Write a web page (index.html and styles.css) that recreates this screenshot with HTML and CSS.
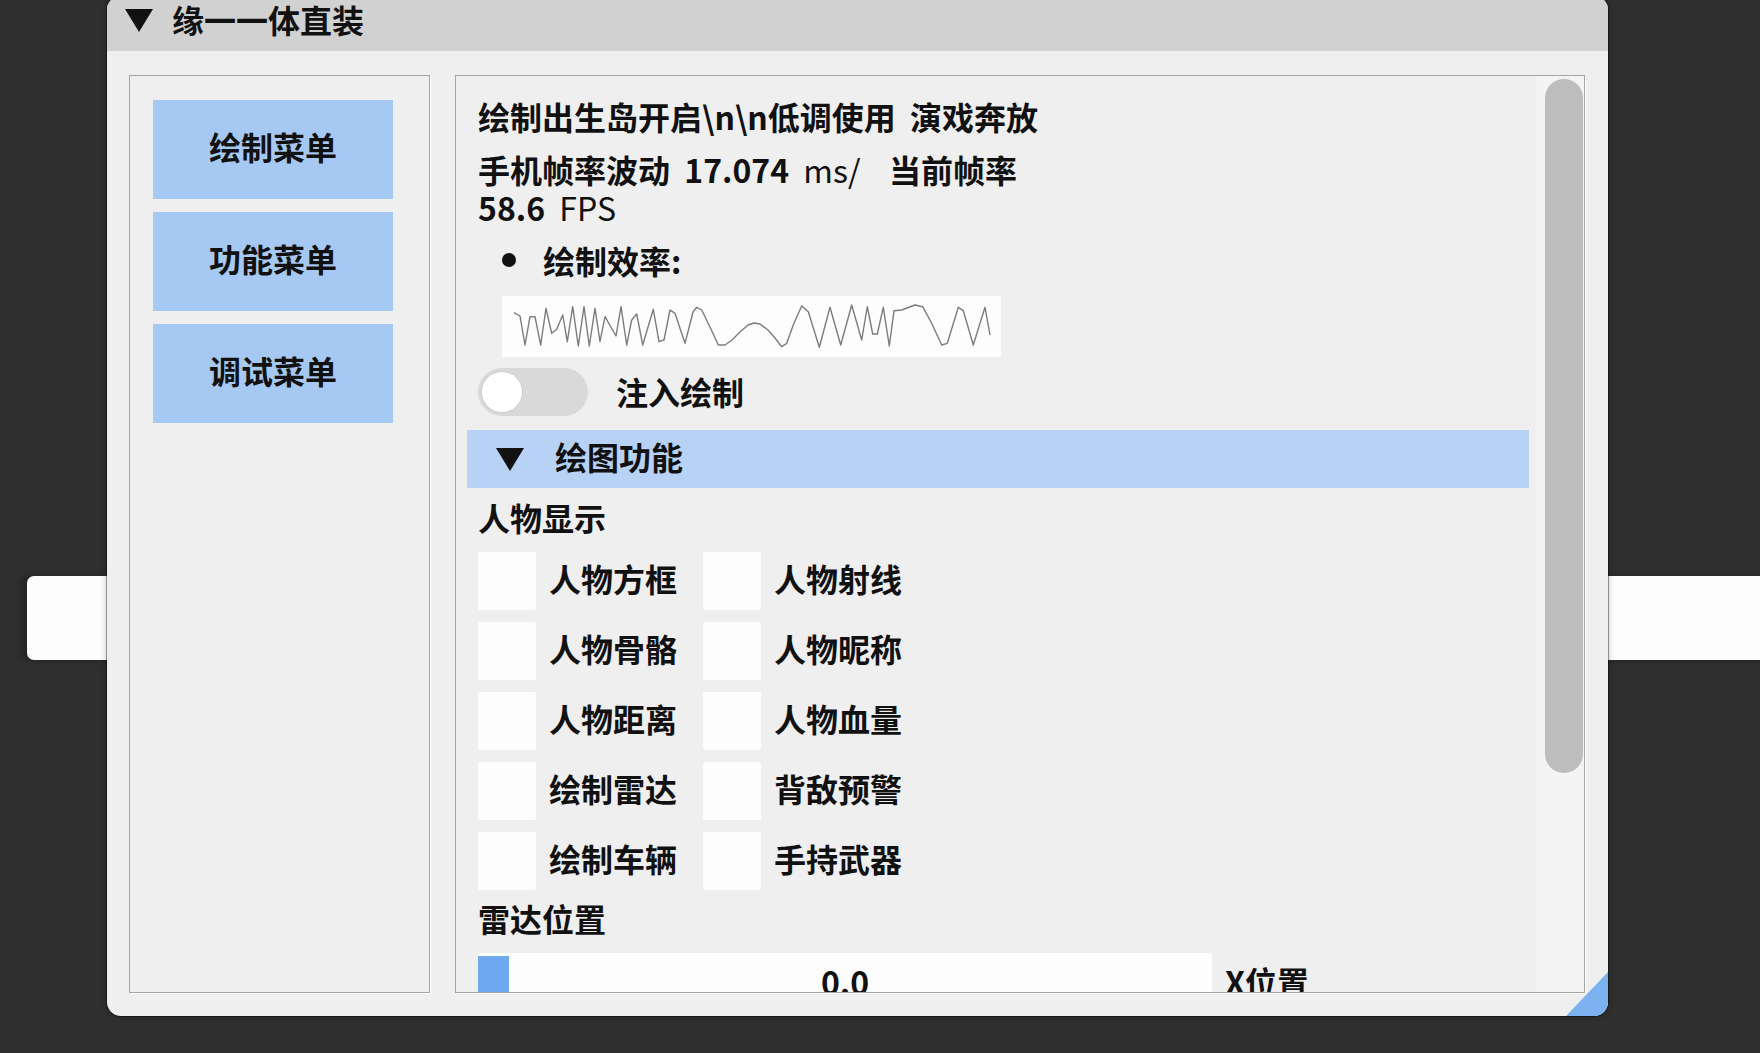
FILE: index.html
```html
<!DOCTYPE html>
<html lang="zh">
<head>
  <meta charset="UTF-8" />
  <title>缘一一体直装</title>
  <link rel="stylesheet" href="styles.css">
</head>
<body>
  <div class="backdrop-bar"></div>

  <div class="window">
    <div class="titlebar">
      <span class="arrow"></span>
      <span class="txt">缘一一体直装</span>
    </div>

    <div class="window-body">
      <div class="menu-panel">
        <button class="menu-btn">绘制菜单</button>
        <button class="menu-btn">功能菜单</button>
        <button class="menu-btn">调试菜单</button>
      </div>

      <div class="content-panel">
        <div class="content">
          <p class="line">绘制出生岛开启\n\n低调使用 演戏奔放</p>
          <p class="line stats">手机帧率波动 17.074 <span class="thin">ms/</span>&nbsp; 当前帧率</p>
          <p class="line">58.6 <span class="thin">FPS</span></p>

          <div class="bullet-row"><span class="dot"></span>绘制效率:</div>

          <svg class="plot" viewBox="0 0 499 61">
            <polyline fill="none" stroke="#7c7c7c" stroke-width="1.4" stroke-linejoin="round"
              points="12,16.7 18,20 23,49 28,20.7 33,20.7 38.7,49 44,12.3 49.7,37.3 54.7,33.3 60.7,19 65.3,45.7 70.7,10.7 76.3,50 82,10.7 87.3,50 93,12.3 98,45.7 103,20.7 114,40 119,10.7 124.7,49 129.7,24 134.7,18 140.7,49 151.3,13.3 157,45.7 162,44 168,14 173,17.3 183,47.3 191,16 194.7,11.3 199.7,14 208,31 216.3,49 223,49 230,44 238,36 246,29 252,27 258,28 266,34 273,42 279.7,50.7 284.7,47.3 292,27 299.7,10 306.3,15.7 317.3,51.3 328,11.3 338.7,49 349.7,9 359.7,44 365.3,10.7 370.7,38 375.3,38 381.3,11.3 387.3,50 392,14.7 399.7,14 413,9 420.7,10.7 430,28 439.7,49 445.3,47.3 456.3,11.3 461.3,14.7 471.3,49 483,11.3 488,39" />
          </svg>

          <div class="toggle-row">
            <span class="toggle"><span class="knob"></span></span>
            <span class="txt">注入绘制</span>
          </div>

          <div class="section-header"><span class="arrow"></span><span class="txt">绘图功能</span></div>

          <div class="label">人物显示</div>
          <div class="check-grid">
            <label class="check"><span class="box"></span><span class="txt">人物方框</span></label>
            <label class="check"><span class="box"></span><span class="txt">人物射线</span></label>
            <label class="check"><span class="box"></span><span class="txt">人物骨骼</span></label>
            <label class="check"><span class="box"></span><span class="txt">人物昵称</span></label>
            <label class="check"><span class="box"></span><span class="txt">人物距离</span></label>
            <label class="check"><span class="box"></span><span class="txt">人物血量</span></label>
            <label class="check"><span class="box"></span><span class="txt">绘制雷达</span></label>
            <label class="check"><span class="box"></span><span class="txt">背敌预警</span></label>
            <label class="check"><span class="box"></span><span class="txt">绘制车辆</span></label>
            <label class="check"><span class="box"></span><span class="txt">手持武器</span></label>
          </div>

          <div class="label radar">雷达位置</div>
          <div class="slider-row">
            <div class="slider">
              <span class="slider-grab"></span>
              <span class="txt">0.0</span>
            </div>
            <span class="txt">X位置</span>
          </div>
        </div>

        <div class="scrollbar"><div class="scroll-grab"></div></div>
      </div>
    </div>

    <div class="resize-grip"></div>
  </div>
</body>
</html>
```

FILE: styles.css
```css
body {
  margin: 0;
  height: 1053px;
  overflow: hidden;
  position: relative;
  background: #2f2f2f;
  color: #111;
  font-family: "Noto Sans CJK SC", sans-serif;
  font-size: 32px;
  font-weight: 700;
}

/* white strip of the app behind the window */
.backdrop-bar {
  position: absolute;
  left: 27px;
  right: -20px;
  top: 576px;
  height: 84px;
  background: #fdfdfd;
  border-radius: 7px;
  box-shadow: -5px 0 6px rgba(0, 0, 0, 0.25);
}

.window {
  position: relative;
  margin: -4px 0 0 107px;
  width: 1501px;
  height: 1020px;
  background: #efefef;
  border-radius: 14px;
  overflow: hidden;
  box-shadow: 0 0 0 1px rgba(0, 0, 0, 0.35), 0 0 6px rgba(0, 0, 0, 0.3);
  display: flex;
  flex-direction: column;
}

.txt {
  margin-bottom: 5px;
}

.titlebar {
  height: 55px;
  box-sizing: border-box;
  padding: 0 0 6px 18px;
  background: #d1d1d1;
  line-height: 38px;
  display: flex;
  align-items: center;
  gap: 19px;
}

.titlebar .txt {
  margin-bottom: 3px;
}

.arrow {
  width: 0;
  height: 0;
  border-left: 14px solid transparent;
  border-right: 14px solid transparent;
  border-top: 23px solid #111;
}

.window-body {
  flex: 1;
  display: flex;
  gap: 25px;
  padding: 24px 23px 23px 22px;
  min-height: 0;
}

.menu-panel,
.content-panel {
  border: 1px solid #a4a4a4;
  box-shadow: 1px 1px 0 #fff;
}

.menu-panel {
  width: 301px;
  box-sizing: border-box;
  padding: 24px 0 0 23px;
  display: flex;
  flex-direction: column;
  gap: 13px;
}

.menu-btn {
  width: 240px;
  height: 99px;
  padding: 0 0 7px;
  border: none;
  background: #a6c9f4;
  color: #111;
  font: inherit;
}

.content-panel {
  flex: 1;
  display: flex;
  overflow: hidden;
}

.content {
  flex: 1;
  min-width: 0;
  padding: 21px 7px 0 22px;
  line-height: 38px;
  overflow: hidden;
}

.line {
  margin: 0;
  word-spacing: 7px;
}

.stats {
  margin-top: 15px;
}

.thin {
  font-weight: 400;
}

.bullet-row {
  margin-top: 15px;
  display: flex;
  align-items: center;
}

.dot {
  width: 14px;
  height: 14px;
  margin: 0 27px 0 24px;
  border-radius: 50%;
  background: #111;
}

.plot {
  display: block;
  width: 499px;
  height: 61px;
  margin: 17px 0 0 24px;
  background: #fdfdfd;
}

.toggle-row {
  margin-top: 11px;
  display: flex;
  align-items: center;
  gap: 28px;
}

.toggle-row .txt {
  margin-bottom: 2px;
}

.toggle {
  width: 110px;
  height: 48px;
  box-sizing: border-box;
  padding-left: 4px;
  border-radius: 24px;
  background: #d9d9d9;
  display: flex;
  align-items: center;
}

.knob {
  width: 40px;
  height: 40px;
  border-radius: 50%;
  background: #fff;
  box-shadow: 0 0 0 1px #cdcdcd;
}

.section-header {
  margin: 14px 0 0 -11px;
  height: 58px;
  padding-left: 29px;
  background: #b7d2f5;
  display: flex;
  align-items: center;
  gap: 31px;
}

.section-header .txt,
.check .txt {
  margin-bottom: 6px;
}

.label {
  margin-top: 10px;
}

.check-grid {
  margin-top: 16px;
  display: grid;
  grid-template-columns: auto auto;
  justify-content: start;
  column-gap: 26px;
  row-gap: 12px;
}

.check {
  display: flex;
  align-items: center;
  gap: 13px;
}

.box {
  width: 58px;
  height: 58px;
  border-radius: 2px;
  background: #fdfdfd;
}

.label.radar {
  margin-top: 9px;
}

.slider-row {
  margin-top: 16px;
  display: flex;
  align-items: center;
  gap: 13px;
}

.slider-row .txt {
  margin-bottom: 2px;
}

.slider {
  position: relative;
  width: 734px;
  height: 58px;
  background: #fdfdfd;
  display: flex;
  align-items: center;
  justify-content: center;
}

.slider-grab {
  position: absolute;
  left: 0;
  top: 3px;
  width: 31px;
  height: 52px;
  background: #6ea8ef;
}

.scrollbar {
  width: 48px;
  box-sizing: border-box;
  padding: 3px 1px 0 9px;
  background: #f4f4f4;
}

.scroll-grab {
  height: 694px;
  border-radius: 19px;
  background: #bdbdbd;
}

.resize-grip {
  position: absolute;
  right: 0;
  bottom: 0;
  width: 42px;
  height: 44px;
  background: #7db2f1;
  clip-path: polygon(100% 0, 100% 100%, 0 100%);
}
```
